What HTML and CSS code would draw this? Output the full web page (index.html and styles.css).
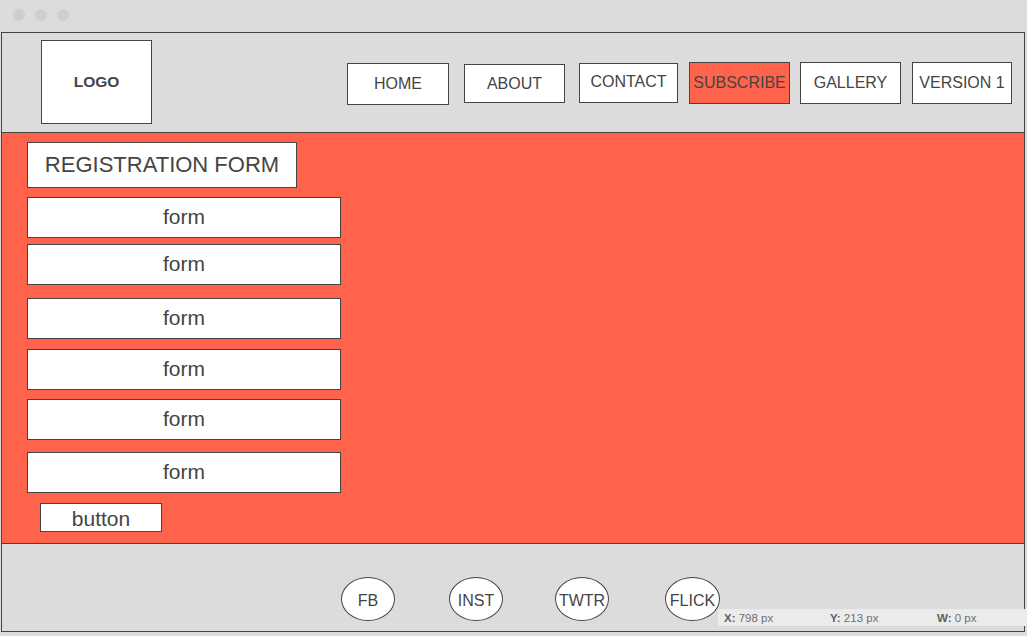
FILE: index.html
```html
<!DOCTYPE html>
<html>
<head>
<meta charset="utf-8">
<title>Registration Form Wireframe</title>
<link rel="stylesheet" href="styles.css">
</head>
<body>
<div class="chrome">
  <span class="dot"></span><span class="dot"></span><span class="dot"></span>
</div>
<div class="frame">
  <header class="header">
    <div class="logo">LOGO</div>
    <nav class="nav">
      <div class="nav-btn">HOME</div>
      <div class="nav-btn">ABOUT</div>
      <div class="nav-btn">CONTACT</div>
      <div class="nav-btn active">SUBSCRIBE</div>
      <div class="nav-btn">GALLERY</div>
      <div class="nav-btn">VERSION 1</div>
    </nav>
  </header>
  <main class="main">
    <div class="title">REGISTRATION FORM</div>
    <div class="field">form</div>
    <div class="field">form</div>
    <div class="field">form</div>
    <div class="field">form</div>
    <div class="field">form</div>
    <div class="field">form</div>
    <div class="button">button</div>
  </main>
  <footer class="footer">
    <div class="social">FB</div>
    <div class="social">INST</div>
    <div class="social">TWTR</div>
    <div class="social">FLICK</div>
  </footer>
  <div class="status">
    <span class="stat"><b>X:</b> 798 px</span>
    <span class="stat"><b>Y:</b> 213 px</span>
    <span class="stat"><b>W:</b> 0 px</span>
  </div>
</div>
</body>
</html>
```

FILE: styles.css
```css
html, body {
  margin: 0;
  padding: 0;
  background: #dcdcdc;
  font-family: "Liberation Sans", Arial, sans-serif;
  color: #444;
}
body {
  width: 1027px;
  height: 636px;
  overflow: hidden;
}
.chrome {
  height: 32px;
  display: flex;
  align-items: center;
  padding-left: 13px;
  gap: 10px;
  box-sizing: border-box;
}
.dot {
  width: 12px;
  height: 12px;
  border-radius: 50%;
  background: #cecece;
  margin-top: -2px;
}
.frame {
  position: relative;
  margin-left: 1px;
  width: 1024px;
  border: 1px solid #444;
  box-sizing: border-box;
}
.header {
  height: 99px;
  border-bottom: 1px solid #444;
  display: flex;
  align-items: flex-start;
  padding-left: 39px;
}
.logo {
  margin-top: 7px;
  width: 111px;
  height: 84px;
  box-sizing: border-box;
  border: 1px solid #444;
  background: #fff;
  display: flex;
  align-items: center;
  justify-content: center;
  font-weight: bold;
  font-size: 15.5px;
}
.nav {
  display: flex;
  align-items: flex-start;
  margin-left: 195px;
  margin-top: 29px;
}
.nav-btn {
  height: 42px;
  box-sizing: border-box;
  border: 1px solid #444;
  background: #fff;
  display: flex;
  align-items: center;
  justify-content: center;
  font-size: 16px;
  width: 101px;
}
.nav-btn:nth-child(1) { width: 102px; margin-top: 1px; height: 42px; }
.nav-btn:nth-child(2) { margin-left: 15px; margin-top: 2px; height: 39px; }
.nav-btn:nth-child(3) { margin-left: 14px; margin-top: 1px; width: 99px; height: 40px; padding-bottom: 2px; }
.nav-btn:nth-child(4) { margin-left: 11px; }
.nav-btn:nth-child(5) { margin-left: 10px; }
.nav-btn:nth-child(6) { margin-left: 11px; width: 100px; }
.nav-btn.active {
  background: #ff634b;
}
.main {
  height: 401px;
  background: #ff634b;
  border-bottom: 1px solid #444;
  display: flex;
  flex-direction: column;
  align-items: flex-start;
  padding: 9px 0 0 25px;
}
.title {
  width: 270px;
  height: 46px;
  box-sizing: border-box;
  border: 1px solid #444;
  background: #fff;
  display: flex;
  align-items: center;
  justify-content: center;
  font-size: 22px;
}
.field {
  width: 314px;
  height: 41px;
  box-sizing: border-box;
  border: 1px solid #444;
  background: #fff;
  display: flex;
  align-items: center;
  justify-content: center;
  font-size: 21px;
  margin-top: 9px;
  padding-bottom: 2px;
}
.field:nth-child(3) { margin-top: 6px; }
.field:nth-child(4) { margin-top: 13px; }
.field:nth-child(5) { margin-top: 10px; }
.field:nth-child(6) { margin-top: 9px; }
.field:nth-child(7) { margin-top: 12px; }
.button {
  margin-top: 10px;
  margin-left: 13px;
  width: 122px;
  height: 29px;
  box-sizing: border-box;
  border: 1px solid #444;
  background: #fff;
  display: flex;
  align-items: center;
  justify-content: center;
  font-size: 21px;
  padding-top: 2px;
}
.footer {
  height: 87px;
  display: flex;
  align-items: flex-start;
  padding-left: 339px;
  box-sizing: border-box;
}
.social {
  margin-top: 33px;
  width: 54px;
  height: 44px;
  box-sizing: border-box;
  border: 1px solid #444;
  border-radius: 50%;
  background: #fff;
  display: flex;
  align-items: center;
  justify-content: center;
  font-size: 16px;
  padding-top: 3px;
}
.social:nth-child(2) { margin-left: 54px; }
.social:nth-child(3) { margin-left: 52px; }
.social:nth-child(4) { margin-left: 56px; width: 55px; }
.status {
  position: absolute;
  left: 716px;
  bottom: 5px;
  width: 309px;
  height: 17px;
  background: #ebebeb;
  display: flex;
  align-items: center;
  overflow: hidden;
  font-family: "Liberation Sans", Arial, sans-serif;
  font-size: 11.5px;
  color: #6f6f6f;
}
.stat {
  flex: 0 0 106px;
  padding-left: 6px;
  box-sizing: border-box;
  white-space: nowrap;
}
.stat:nth-child(2) { flex-basis: 107px; }
.stat b {
  color: #5f5f5f;
}
```
